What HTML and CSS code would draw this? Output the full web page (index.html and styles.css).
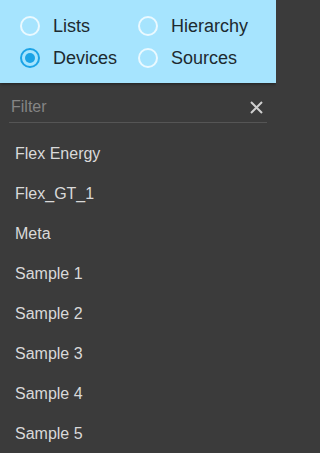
FILE: index.html
```html
<!DOCTYPE html>
<html>
<head>
<meta charset="utf-8">
<link rel="stylesheet" href="styles.css">
</head>
<body>
<div class="app">
  <div class="header">
    <div class="radios">
      <div class="opt"><span class="radio"></span><span class="label">Lists</span></div>
      <div class="opt"><span class="radio"></span><span class="label">Hierarchy</span></div>
      <div class="opt"><span class="radio checked"></span><span class="label">Devices</span></div>
      <div class="opt"><span class="radio"></span><span class="label">Sources</span></div>
    </div>
  </div>
  <div class="filter">
    <span class="placeholder">Filter</span>
    <svg class="close" width="13" height="13" viewBox="0 0 13 13"><path d="M1 1 L12 12 M12 1 L1 12" stroke="#cfcfcf" stroke-width="2" fill="none"/></svg>
  </div>
  <ul class="list">
    <li>Flex Energy</li>
    <li>Flex_GT_1</li>
    <li>Meta</li>
    <li>Sample 1</li>
    <li>Sample 2</li>
    <li>Sample 3</li>
    <li>Sample 4</li>
    <li>Sample 5</li>
  </ul>
</div>
</body>
</html>
```
FILE: styles.css
```css
html, body {
  margin: 0;
  padding: 0;
  background: #3b3b3b;
  font-family: "Liberation Sans", Arial, sans-serif;
  overflow: hidden;
}
.app {
  width: 276px;
  height: 453px;
  overflow: hidden;
  background: #3b3b3b;
}
.header {
  background: #a6e4fe;
  height: 83px;
  box-sizing: border-box;
  padding: 10px 0 0 20px;
  box-shadow: 0 1px 3px rgba(0,0,0,0.45);
  position: relative;
}
.radios {
  display: grid;
  grid-template-columns: 118px 118px;
  grid-auto-rows: 32px;
}
.opt {
  display: flex;
  align-items: center;
  gap: 13px;
}
.radio {
  width: 20px;
  height: 20px;
  box-sizing: border-box;
  border: 2px solid #eaf9ff;
  border-radius: 50%;
  display: flex;
  align-items: center;
  justify-content: center;
}
.radio.checked {
  border-color: #1ba3e6;
}
.radio.checked::after {
  content: "";
  width: 10px;
  height: 10px;
  border-radius: 50%;
  background: #1ba3e6;
}
.label {
  font-size: 18px;
  line-height: 32px;
  color: #1d2a30;
}
.filter {
  margin: 0 9px;
  padding: 14px 4px 5px 2px;
  border-bottom: 1px solid #555555;
  display: flex;
  justify-content: space-between;
  align-items: center;
}
.placeholder {
  font-size: 16px;
  line-height: 20px;
  color: #858585;
}
.close {
  display: block;
  margin-top: 1px;
}
.list {
  list-style: none;
  margin: 11px 0 0 0;
  padding: 0;
}
.list li {
  font-size: 16px;
  line-height: 40px;
  padding-left: 15px;
  color: #d9d9d9;
}
```
